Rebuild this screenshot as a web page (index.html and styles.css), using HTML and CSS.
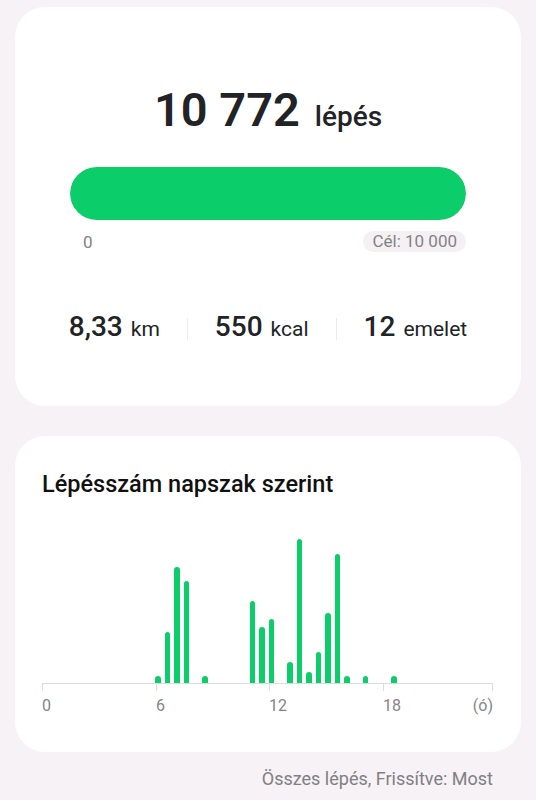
FILE: index.html
```html
<!DOCTYPE html>
<html lang="hu">
<head>
    <meta charset="UTF-8">
    <meta name="viewport" content="width=device-width, initial-scale=1.0">
    <title>Lépések</title>
    <link rel="stylesheet" href="styles.css">
</head>
<body>
    <div class="card summary">
        <div class="total">
            <span class="total-value">10 772</span>
            <span class="total-unit">lépés</span>
        </div>
        <div class="progress">
            <div class="progress-fill" style="width: 100%;"></div>
        </div>
        <div class="progress-labels">
            <span class="start">0</span>
            <span class="goal">Cél: 10 000</span>
        </div>
        <div class="stats">
            <div class="stat"><span class="stat-value">8,33</span><span class="stat-unit">km</span></div>
            <div class="divider"></div>
            <div class="stat"><span class="stat-value">550</span><span class="stat-unit">kcal</span></div>
            <div class="divider"></div>
            <div class="stat"><span class="stat-value">12</span><span class="stat-unit">emelet</span></div>
        </div>
    </div>

    <div class="card chart-card">
        <h2 class="chart-title">Lépésszám napszak szerint</h2>
        <div class="chart">
            <div class="bars" id="bars"></div>
            <div class="axis">
                <div class="axis-cell"></div>
                <div class="axis-cell"></div>
                <div class="axis-cell"></div>
                <div class="axis-cell last"></div>
            </div>
            <div class="axis-labels">
                <span>0</span>
                <span>6</span>
                <span>12</span>
                <span class="last"><span>18</span><span>(ó)</span></span>
            </div>
        </div>
    </div>

    <div class="footer">Összes lépés, Frissítve: Most</div>

    <script>
        // half-hour slot -> bar height (px)
        const data = {
            12: 7.5, 13: 51, 14: 116, 15: 102, 17: 7.5,
            22: 82, 23: 56, 24: 64,
            26: 21, 27: 144, 28: 11, 29: 31, 30: 70, 31: 129, 32: 7.5,
            34: 7.5, 37: 7.5
        };
        const bars = document.getElementById('bars');
        for (let i = 0; i < 48; i++) {
            const slot = document.createElement('div');
            slot.className = 'slot';
            if (data[i]) {
                const bar = document.createElement('div');
                bar.className = 'bar';
                bar.style.height = data[i] + 'px';
                slot.appendChild(bar);
            }
            bars.appendChild(slot);
        }
    </script>
</body>
</html>
```

FILE: styles.css
```css
body {
    margin: 0;
    padding: 7px 15px 0;
    background-color: #f7f2f5;
    font-family: Roboto, "Noto Sans", sans-serif;
    color: #222326;
}
.card {
    background-color: #fff;
    border-radius: 30px;
}
.summary {
    height: 399px;
    box-sizing: border-box;
    padding: 75px 55px 0;
}
.total {
    text-align: center;
    line-height: 56px;
    height: 56px;
}
.total-value {
    font-size: 47px;
    font-weight: 600;
}
.total-unit {
    font-size: 28px;
    font-weight: 500;
    margin-left: 11px;
}
.progress {
    margin-top: 29px;
    height: 53px;
    border-radius: 27px;
    background-color: #e9e5e8;
    overflow: hidden;
}
.progress-fill {
    height: 100%;
    background-color: #0bce6b;
    border-radius: 27px;
}
.progress-labels {
    display: flex;
    justify-content: space-between;
    align-items: center;
    margin-top: 11px;
    font-size: 17px;
    color: #838385;
}
.start {
    padding-left: 13px;
}
.goal {
    background-color: #f5f0f3;
    border-radius: 11px;
    padding: 0 9px;
    line-height: 21px;
}
.stats {
    display: flex;
    justify-content: center;
    align-items: center;
    gap: 27px;
    margin-top: 59px;
    margin-left: -40px;
    margin-right: -40px;
}
.stat {
    line-height: 32px;
    white-space: nowrap;
}
.stat-value {
    font-size: 28px;
    font-weight: 500;
}
.stat-unit {
    font-size: 21px;
    font-weight: 400;
    margin-left: 8px;
}
.divider {
    width: 1px;
    height: 22px;
    background-color: #ececec;
}
.chart-card {
    margin-top: 30px;
    height: 316px;
    box-sizing: border-box;
    padding: 34px 29px 0 27px;
}
.chart-title {
    margin: 0;
    font-size: 23.5px;
    font-weight: 500;
    line-height: 28px;
    color: #111;
}
.chart {
    margin-top: 25px;
}
.bars {
    display: flex;
    align-items: flex-end;
    height: 160px;
    width: 453px;
}
.slot {
    flex: 1;
    display: flex;
    align-items: flex-end;
    height: 100%;
}
.bar {
    width: 5.5px;
    background-color: #0bce6b;
    border-radius: 3px 3px 0 0;
}
.axis {
    display: grid;
    grid-template-columns: 114px 113px 114px 1fr;
    width: 451px;
    height: 7px;
    border-top: 1px solid #dcdcdc;
}
.axis-cell {
    border-left: 1px solid #dcdcdc;
}
.axis-cell.last {
    border-right: 1px solid #dcdcdc;
}
.axis-labels {
    display: grid;
    grid-template-columns: 114px 113px 114px 1fr;
    width: 451px;
    margin-top: 5px;
    font-size: 16px;
    line-height: 20px;
    color: #858587;
}
.axis-labels .last {
    display: flex;
    justify-content: space-between;
}
.footer {
    margin-top: 16px;
    padding-right: 28px;
    text-align: right;
    font-size: 18px;
    line-height: 22px;
    color: #808083;
}
```
